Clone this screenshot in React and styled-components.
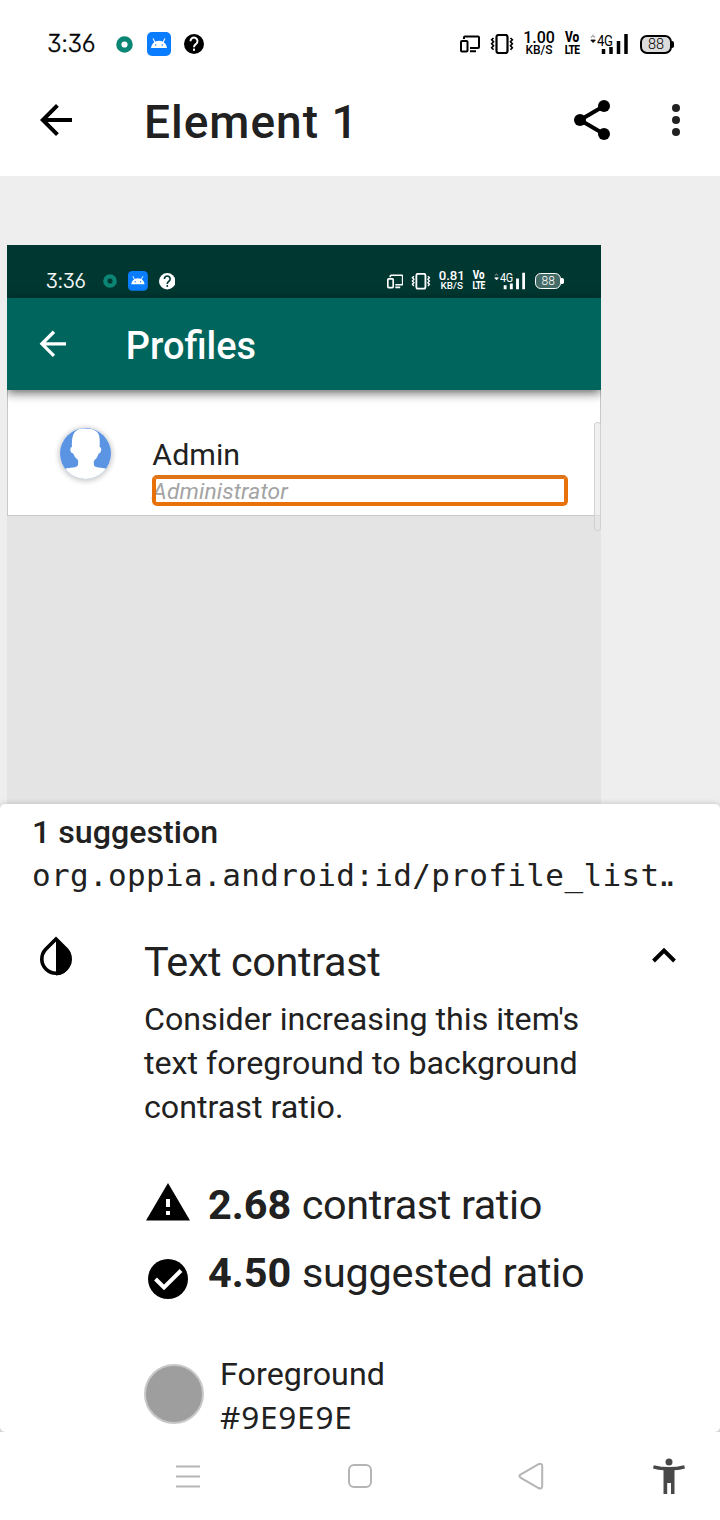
import React from "react";
import styled, { createGlobalStyle, css } from "styled-components";

const GlobalStyle = createGlobalStyle`
  * { box-sizing: border-box; }
  body { margin: 0; background: #fff; font-family: Roboto, sans-serif; color: #212121; }
  svg { display: block; flex: none; }
`;

const Screen = styled.div`
  width: 720px;
  height: 1520px;
  display: flex;
  flex-direction: column;
  overflow: hidden;
  background: #fff;
`;

const StatusRow = styled.header`
  height: 64px;
  flex: none;
  padding: 24px 46px 0 47px;
  display: flex;
  align-items: center;
  justify-content: space-between;
  color: ${(p) => (p.$dark ? "#fff" : "#000")};
  background: ${(p) => (p.$dark ? "#003731" : "#fff")};
`;

const StatusGroup = styled.div`
  display: flex;
  align-items: center;
`;

const Clock = styled.span`
  width: 69px;
  font: 300 24px/40px Inter, sans-serif;
  -webkit-text-stroke: 0.3px currentColor;
  font-feature-settings: "cv09", "cv03", "cv04";
  letter-spacing: -0.4px;
`;

const Gap = styled.span`
  flex: none;
  width: ${(p) => p.$w}px;
`;

const TinyStack = styled.span`
  display: flex;
  flex-direction: column;
  align-items: center;
  width: ${(p) => p.$w}px;
  white-space: nowrap;
  ${(p) =>
    p.$narrow &&
    css`
      transform: scaleX(0.82);
    `}
`;

const TinyTop = styled.span`
  font: ${(p) => (p.$narrow ? "800 14.5px/12px" : "500 16px/12px")} Roboto, sans-serif;
`;

const TinyBottom = styled.span`
  font: ${(p) => (p.$narrow ? "800 12.5px/12px" : "500 12px/12px")} Roboto, sans-serif;
  letter-spacing: ${(p) => (p.$narrow ? "-0.8px" : "0")};
`;

const SignalBox = styled.span`
  position: relative;
  width: 38px;
  height: 22px;
`;

const SignalLabel = styled.span`
  position: absolute;
  left: 7px;
  top: 1px;
  font: 400 15px/14px Roboto, sans-serif;
  letter-spacing: -0.5px;
  transform: scaleX(0.88);
  transform-origin: 0 0;
`;

const Battery = styled.span`
  position: relative;
  width: 32px;
  height: 19px;
  display: flex;
  align-items: center;
  justify-content: center;
  border: 2px solid currentColor;
  border-radius: 7px;
  background: ${(p) => (p.$dark ? "#456b66" : "#dcdcdc")};
  font: 300 14.5px/15px Roboto, sans-serif;
  &::after {
    content: "";
    position: absolute;
    right: -4px;
    top: 4px;
    width: 3px;
    height: 7px;
    border-radius: 0 2px 2px 0;
    background: currentColor;
  }
`;

const AppBar = styled.div`
  height: 112px;
  flex: none;
  padding: 0 36px 0 32px;
  display: flex;
  align-items: center;
  color: ${(p) => (p.$dark ? "#fff" : "#000")};
  background: ${(p) => (p.$dark ? "#00655c" : "#fff")};
  ${(p) =>
    p.$dark &&
    css`
      position: relative;
      box-shadow: 0 4px 12px rgba(0, 0, 0, 0.6);
    `}
`;

const Title = styled.h1`
  flex: 1;
  margin: 4px 0 0 64px;
  font-weight: 500;
  font-size: 46px;
  line-height: 56px;
  letter-spacing: ${(p) => p.$spacing || 0}px;
  color: ${(p) => (p.$dark ? "#fff" : "#212121")};
`;

const Stage = styled.main`
  height: 628px;
  flex: none;
  padding: 69px 0 0 7px;
  background: #eeeeee;
`;

const Shot = styled.section`
  position: relative;
  width: 594px;
  height: 559px;
  overflow: hidden;
  background: #e4e4e4;
`;

const Scaled = styled.div`
  width: 720px;
  zoom: 0.825;
`;

const ProfileCard = styled.div`
  height: 153px;
  padding: 43px 0 0 63px;
  display: flex;
  background: #fff;
  border: solid #c9c9c9;
  border-width: 0 2px 2px 2px;
`;

const Avatar = styled.div`
  width: 62px;
  height: 62px;
  margin-top: 3px;
  border-radius: 50%;
  overflow: hidden;
  box-shadow: 0 1px 7px 2px rgba(0, 0, 0, 0.2);
`;

const ProfileText = styled.div`
  margin: 14px 0 0 50px;
`;

const ProfileName = styled.div`
  font-size: 36.8px;
  line-height: 43px;
`;

const ProfileRole = styled.div`
  margin-top: 8px;
  font-size: 27.6px;
  line-height: 32px;
  font-style: italic;
  letter-spacing: 0.15px;
  color: #a3a3a3;
`;

const Highlight = styled.div`
  position: absolute;
  left: 145px;
  top: 230px;
  width: 416px;
  height: 31px;
  border: 4px solid #e8710a;
  border-top-color: #de7318;
  border-radius: 5px;
`;

const ScrollThumb = styled.div`
  position: absolute;
  right: 0;
  top: 177px;
  width: 7px;
  height: 109px;
  border: 1px solid #d2d2d2;
  border-radius: 3px;
  background: rgba(230, 230, 230, 0.6);
`;

const SheetFrame = styled.div`
  position: relative;
  height: 628px;
  flex: none;
  background: linear-gradient(#eee 50%, #d8d8d8 50%);
`;

const Sheet = styled.section`
  height: 628px;
  padding: 6px 32px 0;
  border-radius: 5px;
  background: #fff;
  box-shadow: 0 -1px 5px rgba(0, 0, 0, 0.15);
  clip-path: inset(-8px 0 0 0);
`;

const SuggestionCount = styled.div`
  font-weight: 500;
  font-size: 32.2px;
  line-height: 44px;
`;

const ResourceId = styled.div`
  font: 400 31px/42px "DejaVu Sans Mono", monospace;
  letter-spacing: 0.35px;
  white-space: nowrap;
`;

const Ellipsis = styled.span`
  margin-left: -5px;
  letter-spacing: -12px;
`;

const CheckHeader = styled.div`
  display: flex;
  align-items: flex-start;
  height: 56px;
  margin-top: 36px;
`;

const CheckTitle = styled.h2`
  flex: 1;
  margin: 5px 0 0 64px;
  font-weight: 400;
  font-size: 41.4px;
  line-height: 50px;
  letter-spacing: -0.38px;
`;

const CheckBody = styled.div`
  padding-left: 112px;
`;

const Description = styled.p`
  margin: 9px 0 0;
  font-size: 32.2px;
  line-height: 44px;
  width: 470px;
`;

const Ratios = styled.div`
  margin-top: 39px;
`;

const RatioRow = styled.div`
  display: flex;
  align-items: center;
  height: 68px;
  font-size: 41.4px;
  line-height: 50px;
  gap: 16px;
  white-space: pre;
`;

const RatioText = styled.span`
  margin-top: 6px;
  letter-spacing: ${(p) => p.$spacing}px;
  b { letter-spacing: 0; margin-right: 0.6px; }
`;

const IconShift = styled.span`
  margin-top: ${(p) => p.$top}px;
`;

const ColorRow = styled.div`
  display: flex;
  align-items: flex-start;
  gap: 16px;
  margin-top: 47px;
`;

const Swatch = styled.span`
  width: 60px;
  height: 60px;
  margin-top: 13px;
  border: 2px solid #c8c8c8;
  border-radius: 50%;
  background: #9e9e9e;
`;

const ColorLabel = styled.div`
  padding-top: 1px;
  font-size: 32.2px;
  line-height: 44px;
  letter-spacing: 0.08px;
`;

const ColorValue = styled.div`
  margin-top: 4px;
  font: 400 31.5px/34px "Noto Sans", sans-serif;
  letter-spacing: 0.8px;
`;

const NavBar = styled.nav`
  height: 88px;
  display: flex;
  padding-left: 102px;
`;

const NavSlot = styled.div`
  width: ${(p) => p.$w}px;
  display: flex;
  align-items: center;
  justify-content: center;
`;

function BackIcon() {
  return (
    <svg width="48" height="48" viewBox="0 0 24 24" fill="currentColor">
      <path d="M20 11H7.830l5.590-5.590L12 4l-8 8 8 8 1.410-1.410L7.830 13H20v-2z" />
    </svg>
  );
}

function AndroidBadge() {
  return (
    <svg width="24" height="24" viewBox="0 0 24 24">
      <rect width="24" height="24" rx="5" fill="#0a7cff" />
      <path d="M4 16a8 7.2 0 0 1 16 0z" fill="#fff" />
      <path d="M8 10.5L6.2 6.8M16 10.5L17.8 6.8" stroke="#fff" strokeWidth="1.1" strokeLinecap="round" />
      <circle cx="8.7" cy="13" r=".8" fill="#0a7cff" />
      <circle cx="15.3" cy="13" r=".8" fill="#0a7cff" />
    </svg>
  );
}

function HelpBadge({ dark }) {
  return (
    <svg width="20" height="20" viewBox="0 0 20 20">
      <circle cx="10" cy="10" r="10" fill="currentColor" />
      <path
        d="M6.500 7.300a3.500 3.500 0 1 1 5.500 2.700c-1.200.9-2 1.400-2 3.200"
        fill="none"
        stroke={dark ? "#003731" : "#fff"}
        strokeWidth="2"
      />
      <rect x="9" y="14.6" width="2" height="2.200" fill={dark ? "#003731" : "#fff"} />
    </svg>
  );
}

function StatusBar({ dark, speed }) {
  return (
    <StatusRow $dark={dark}>
      <StatusGroup>
        <Clock>3:36</Clock>
        <svg width="17" height="17" viewBox="0 0 17 17">
          <circle cx="8.5" cy="8.5" r="5.7" fill="none" stroke="#0b8574" strokeWidth="5.2" />
        </svg>
        <Gap $w={14} />
        <AndroidBadge />
        <Gap $w={13} />
        <HelpBadge dark={dark} />
      </StatusGroup>
      <StatusGroup>
        <svg width="20" height="18" viewBox="0 0 20 18" fill="none" stroke="currentColor" strokeWidth="2">
          <path d="M4 4V2.5Q4 1.5 5 1.5H18Q19 1.5 19 2.5V12Q19 13 18 13H10M10 16.2H16" />
          <rect x="1" y="6" width="6.5" height="10.5" rx="1" />
        </svg>
        <Gap $w={10} />
        <svg width="24" height="20" viewBox="0 0 24 20" fill="none" stroke="currentColor">
          <rect x="6.500" y="1" width="11" height="18" rx="2" strokeWidth="2.200" />
          <path
            d="M3.500 4L1.700 5.700L3.500 7.700L1.700 9.700L3.500 11.700L1.700 13.700L3.500 15.700M20.500 4L22.300 5.700L20.500 7.700L22.300 9.700L20.500 11.700L22.300 13.700L20.500 15.700"
            strokeWidth="1.700"
          />
        </svg>
        <Gap $w={8} />
        <TinyStack $w={34}>
          <TinyTop>{speed}</TinyTop>
          <TinyBottom>KB/S</TinyBottom>
        </TinyStack>
        <Gap $w={8} />
        <TinyStack $w={16} $narrow>
          <TinyTop $narrow>Vo</TinyTop>
          <TinyBottom $narrow>LTE</TinyBottom>
        </TinyStack>
        <Gap $w={10} />
        <SignalBox>
          <SignalLabel>4G</SignalLabel>
          <svg width="38" height="22" viewBox="0 0 38 22" fill="none" stroke="currentColor">
            <path d="M1 4.5L3 2.5L5 4.5" strokeWidth="1.4" opacity=".35" />
            <path d="M.8 7H5.4L3.1 9.6Z" fill="currentColor" strokeWidth=".8" />
            <path d="M13.500 16V21M21 14V21M28.500 8V21M36 1V21" strokeWidth="3.500" />
          </svg>
        </SignalBox>
        <Gap $w={12} />
        <Battery $dark={dark}>88</Battery>
        <Gap $w={2} />
      </StatusGroup>
    </StatusRow>
  );
}

function ProfilePreview() {
  return (
    <Shot>
      <Scaled>
        <StatusBar dark speed="0.81" />
        <AppBar $dark>
          <BackIcon />
          <Title $dark>Profiles</Title>
        </AppBar>
        <ProfileCard>
          <Avatar>
            <svg width="62" height="62" viewBox="0 0 62 62">
              <rect width="62" height="62" fill="#5c94e4" />
              <path
                d="M0 62V51.500Q8 48 18 47.500Q22 47 22 43V39Q17.500 36 16 31Q12.500 30 12.500 26Q12.500 23 14.500 23Q13.500 7 20 3Q26 -1 32 1Q40 0 45 5Q49 8 48 23Q50 23 50 27Q49 31 47 31Q45 37 41 40V44Q41 47 45 47.500Q54 48 62 51.500V62Z"
                fill="#fff"
              />
            </svg>
          </Avatar>
          <ProfileText>
            <ProfileName>Admin</ProfileName>
            <ProfileRole>Administrator</ProfileRole>
          </ProfileText>
        </ProfileCard>
      </Scaled>
      <Highlight />
      <ScrollThumb />
    </Shot>
  );
}

function Suggestions() {
  return (
    <SheetFrame>
      <Sheet>
        <SuggestionCount>1 suggestion</SuggestionCount>
        <ResourceId>
          org.oppia.android:id/profile_list<Ellipsis>..</Ellipsis>
        </ResourceId>
        <CheckHeader>
          <svg width="48" height="48" viewBox="0 0 48 48">
            <path d="M24 7L13.500 17.500A14.200 14.200 0 1 0 34.500 17.500Z" fill="none" stroke="#000" strokeWidth="3.600" />
            <path d="M24 6L35 17A16 16 0 0 1 24 43.500Z" />
          </svg>
          <CheckTitle>Text contrast</CheckTitle>
          <svg width="48" height="48" viewBox="0 0 48 48" fill="none" stroke="#000" strokeWidth="4">
            <path d="M13.500 29L24 18.500L34.500 29" />
          </svg>
        </CheckHeader>
        <CheckBody>
          <Description>Consider increasing this item's text foreground to background contrast ratio.</Description>
          <Ratios>
            <RatioRow>
              <svg width="48" height="48" viewBox="0 0 48 48">
                <path d="M24 5L46 42.500H2Z" />
                <path d="M24 21V29M24 33V37" stroke="#fff" strokeWidth="4" />
              </svg>
              <RatioText $spacing={-0.38}><b>2.68</b> contrast ratio</RatioText>
            </RatioRow>
            <RatioRow>
              <IconShift $top={18}>
                <svg width="48" height="48" viewBox="0 0 48 48">
                  <circle cx="24" cy="24" r="20" />
                  <path d="M11.500 24L20 32.500L37 15.500" fill="none" stroke="#fff" strokeWidth="4" />
                </svg>
              </IconShift>
              <RatioText $spacing={-0.23}><b>4.50</b> suggested ratio</RatioText>
            </RatioRow>
          </Ratios>
          <ColorRow>
            <Swatch />
            <div>
              <ColorLabel>Foreground</ColorLabel>
              <ColorValue>#9E9E9E</ColorValue>
            </div>
          </ColorRow>
        </CheckBody>
      </Sheet>
    </SheetFrame>
  );
}

export default function App() {
  return (
    <Screen>
      <GlobalStyle />
      <StatusBar speed="1.00" />
      <AppBar>
        <BackIcon />
        <Title $spacing={1}>Element 1</Title>
        <svg width="40" height="42" viewBox="0 0 40 42">
          <path d="M32 7L8 21L32 35" fill="none" stroke="#000" strokeWidth="4" />
          <circle cx="32" cy="7" r="6" />
          <circle cx="8" cy="21" r="6" />
          <circle cx="32" cy="35" r="6" />
        </svg>
        <Gap $w={56} />
        <svg width="16" height="34" viewBox="0 0 16 34" fill="#212121">
          <circle cx="8" cy="5" r="4" />
          <circle cx="8" cy="17" r="4" />
          <circle cx="8" cy="29" r="4" />
        </svg>
      </AppBar>
      <Stage>
        <ProfilePreview />
      </Stage>
      <Suggestions />
      <NavBar>
        <NavSlot $w={172}>
          <svg width="24" height="24" viewBox="0 0 24 24" stroke="#b5b5b5" strokeWidth="2">
            <path d="M0 2.500H24M0 12.500H24M0 22.500H24" />
          </svg>
        </NavSlot>
        <NavSlot $w={172}>
          <svg width="24" height="24" viewBox="0 0 24 24" fill="none" stroke="#b5b5b5" strokeWidth="2">
            <rect x="1" y="1" width="22" height="22" rx="5" />
          </svg>
        </NavSlot>
        <NavSlot $w={172}>
          <svg width="28" height="28" viewBox="0 0 28 28" fill="none" stroke="#b5b5b5" strokeWidth="2">
            <path d="M2.500 12.600L20.500 2.200Q24.200 1 24.200 4V24Q24.200 27.500 20.500 26L2.500 15.600Q.3 14.100 2.500 12.600Z" />
          </svg>
        </NavSlot>
        <NavSlot $w={102}>
          <svg width="32" height="36" viewBox="0 0 32 36" fill="#484848">
            <circle cx="16" cy="4" r="3.500" />
            <path d="M.8 7.200Q16 11 31.200 7.200L32 10.500Q27 12 21.500 12.200V36H18V25H14.200V36H10.500V12.200Q5 12 0 10.500Z" />
          </svg>
        </NavSlot>
      </NavBar>
    </Screen>
  );
}
